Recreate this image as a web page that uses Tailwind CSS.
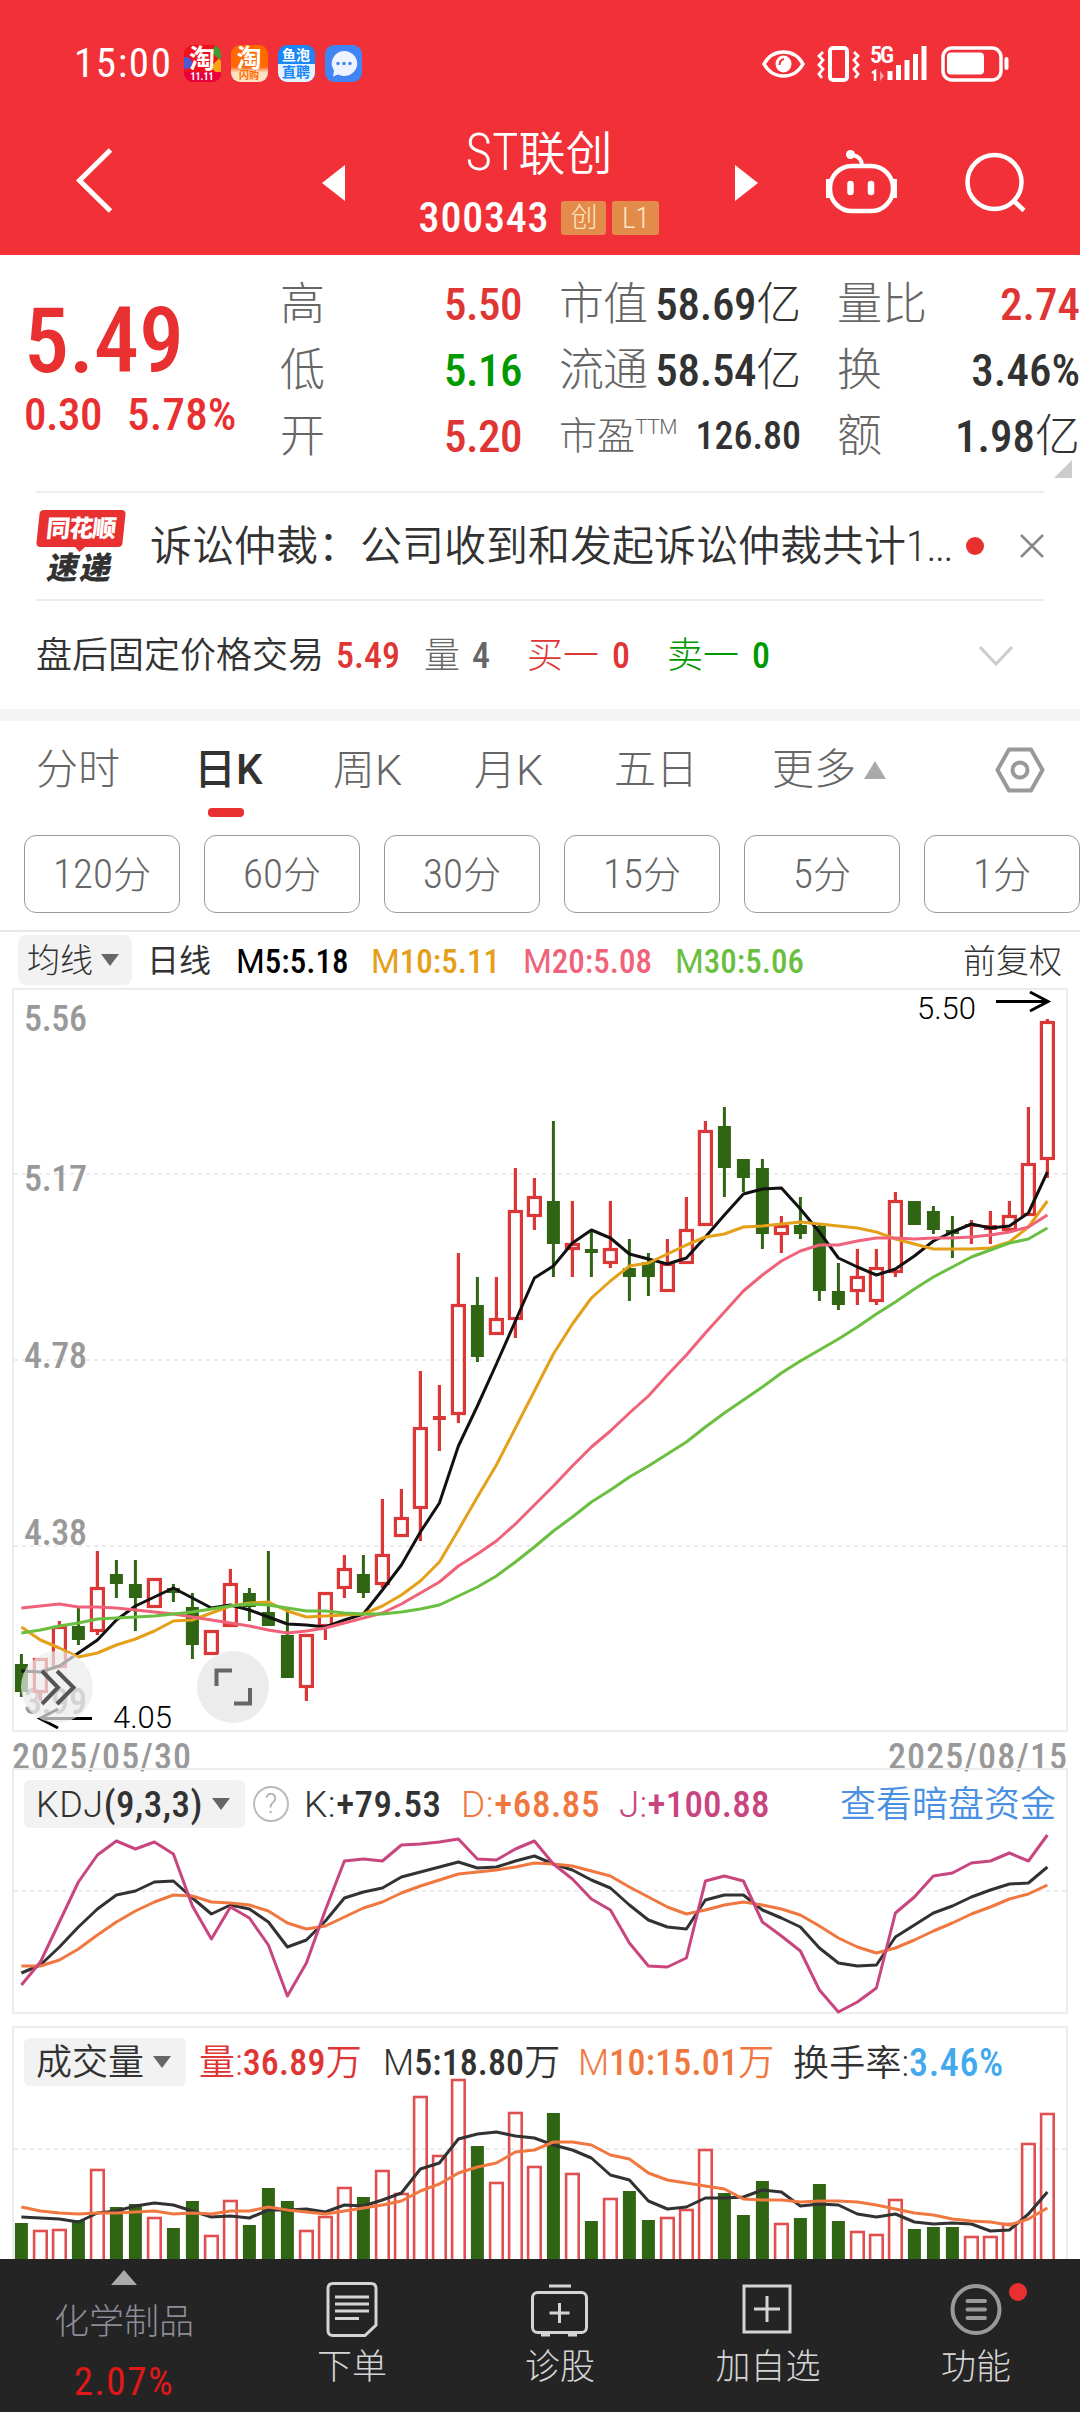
<!DOCTYPE html>
<html lang="zh-CN">
  <head>
    <meta charset="UTF-8" />
    <meta name="viewport" content="width=device-width, initial-scale=1.0" />
    <title>ST联创 300343</title>
    <script src="https://cdn.jsdelivr.net/npm/@tailwindcss/browser@4"></script>
  </head>
  <body
    class="w-[1080px] h-[2412px] overflow-hidden bg-white leading-none whitespace-nowrap text-[#323232] font-light font-['Roboto_Condensed','Noto_Sans_CJK_SC',sans-serif]"
  >
    <!-- header -->
    <header class="h-[255px] bg-[#f13038] text-white">
      <div class="flex h-[127px] items-center pl-[74px] pr-[70px]">
        <span class="text-[41px] font-normal tracking-[1.6px]">15:00</span>
        <div class="ml-[11px] flex gap-[10px] font-bold">
          <div class="relative h-[37px] w-[37px] overflow-hidden rounded-[9px] bg-[#f2101c] text-center">
            <div class="absolute -left-1 top-3 h-3 w-3 rounded-full bg-[#4a5bd8]"></div>
            <div class="absolute -right-1 top-0 h-3 w-3 rotate-45 bg-[#3f9c35]"></div>
            <div class="absolute -right-1 top-4 h-3 w-3 rotate-45 bg-[#f7a21b]"></div>
            <div class="relative pt-[1px] text-[26px]">淘</div>
            <div class="absolute bottom-0 w-full bg-[#e8003c] text-[10px]">11.11</div>
          </div>
          <div class="h-[37px] w-[37px] overflow-hidden rounded-[9px] bg-linear-to-b from-[#ff6a00] from-60% to-[#ffe2c4] to-75% text-center">
            <div class="pt-[1px] text-[25px]">淘</div>
            <div class="text-[10px] text-[#ff6a00]">闪购</div>
          </div>
          <div class="h-[37px] w-[37px] overflow-hidden rounded-[9px] bg-[#1b86f7] text-center text-[14px]">
            <div class="h-[19px] pt-[3px]">鱼泡</div>
            <div class="h-[18px] bg-[#e4f1ff] pt-[1px] text-[#1b86f7]">直聘</div>
          </div>
          <div class="h-[37px] w-[37px] rounded-[9px] bg-[#4184f4]">
            <svg viewBox="0 0 37 37" class="h-full w-full">
              <path d="M19 6a13 12.5 0 1 1-6 23.500l-5 2 1-6A13 12.500 0 0 1 19 6z" fill="#eef4ff" />
              <g fill="#4184f4"><circle cx="13" cy="18.500" r="1.700" /><circle cx="19" cy="18.500" r="1.700" /><circle cx="25" cy="18.500" r="1.700" /></g>
            </svg>
          </div>
        </div>
        <svg viewBox="762 34 248 60" class="ml-auto h-[60px] w-[248px]" fill="none" stroke="#fff" stroke-width="3.500">
          <path d="M764 64c9-16 30-16 39 0c-9 16-30 16-39 0z" />
          <ellipse cx="783.500" cy="64" rx="8" ry="8.500" fill="#fff" stroke="none" />
          <path d="M779.500 65q0-5 4.500-6" stroke="#f13038" stroke-width="2" />
          <rect x="830" y="48" width="17" height="32" rx="3" stroke-width="4" />
          <path d="M823 52l-4 4 4 4-4 5 4 4-4 5 3 4M854 52l4 4-4 4 4 5-4 4 4 5-3 4" stroke-width="2.800" />
          <text x="870" y="62.500" font-size="24" font-weight="600" fill="#fff" stroke="none" textLength="24">5G</text>
          <path d="M872 73l3-2v10" stroke-width="2.500" />
          <path d="M880 71l4 5-4 5z" fill="#f9a0a4" stroke="none" />
          <path d="M890 80V71M898.500 80V65M907 80V60M915.500 80V54M924 80V46" stroke-width="5" />
          <rect x="943" y="48" width="58" height="32" rx="9" stroke-width="3.500" />
          <rect x="947" y="52.500" width="37" height="22" rx="4" fill="#fff" stroke="none" />
          <path d="M1006.500 59v9" stroke-width="4" stroke-linecap="round" />
        </svg>
      </div>

      <div class="flex h-[128px] items-start">
        <svg viewBox="70 127 300 90" class="ml-[70px] h-[90px] w-[300px]">
          <path d="M110.500 150L79.500 180.500L110.500 211" fill="none" stroke="#fff" stroke-width="5" />
          <path d="M345 165v36l-23-18z" fill="#fff" />
        </svg>
        <div class="flex w-[338px] flex-col items-center">
          <h1 class="text-[47px] font-[350]"><span class="text-[51px]">ST</span>联创</h1>
          <div class="mt-[19px] flex items-center gap-[6px]">
            <span class="mr-[6px] text-[42px] font-medium tracking-[0.8px]">300343</span>
            <span class="flex h-[34px] w-[45px] items-center justify-center rounded-[3px] bg-[#e38b4b] text-[27px] text-[#ffe9c4]">创</span>
            <span class="flex h-[34px] w-[47px] items-center justify-center rounded-[3px] bg-[#e38b4b] text-[29px] text-[#ffe9c4]">L1</span>
          </div>
        </div>
        <svg viewBox="708 127 372 90" class="h-[90px] w-[372px]" fill="none" stroke="#fff" stroke-width="4.500">
          <path d="M735 165v36l23-18z" fill="#fff" stroke="none" />
          <rect x="830" y="166" width="63" height="45" rx="22" />
          <path d="M828 179v19M895 179v19" stroke-width="4" />
          <path d="M862 166q0-9-9-11" stroke-width="4" />
          <circle cx="850.500" cy="154.500" r="4.500" fill="#fff" stroke="none" />
          <path d="M850.500 184v8M871 184v8" stroke-width="6.500" stroke-linecap="round" />
          <circle cx="994.500" cy="182" r="27" />
          <path d="M1013 200l11 10.500" />
        </svg>
      </div>
    </header>

    <!-- quote -->
    <section class="relative flex h-[236px] items-start">
      <div class="w-[280px] pl-[24px] text-[#e93030]">
        <div class="pt-[42px] text-[90px] font-medium">5.49</div>
        <div class="flex gap-[25px] pt-[5px] text-[45px] font-medium tracking-[-0.5px]">
          <span>0.30</span><span class="tracking-[0.2px]">5.78%</span>
        </div>
      </div>
      <div class="grid w-[242px] auto-rows-[66px] grid-cols-[auto_auto] items-center justify-between pt-[16px] text-[45px] text-[#666]">
        <span>高</span><b class="justify-self-end font-medium tracking-[-0.5px] text-[#e03535]">5.50</b>
        <span>低</span><b class="justify-self-end font-medium tracking-[-0.5px] text-[#090]">5.16</b>
        <span>开</span><b class="justify-self-end font-medium tracking-[-0.5px] text-[#e03535]">5.20</b>
      </div>
      <!-- TTM hangs out of the narrow label column -->
      <div class="ml-[37px] grid w-[242px] auto-rows-[66px] grid-cols-[80px_auto] items-center justify-between pt-[16px] text-[45px] text-[#666]">
        <span class="tracking-[-1px]">市值</span><span class="justify-self-end tracking-[-0.3px] text-[#323232]"><b class="font-medium">58.69</b>亿</span>
        <span class="tracking-[-1px]">流通</span><span class="justify-self-end tracking-[-0.3px] text-[#323232]"><b class="font-medium">58.54</b>亿</span>
        <span class="flex text-[38px]">市盈<i class="not-italic font-[Roboto] text-[21px] tracking-[-0.5px]">TTM</i></span><b class="justify-self-end text-[38px] font-medium text-[#323232]">126.80</b>
      </div>
      <div class="ml-[36px] grid w-[243px] auto-rows-[66px] grid-cols-[auto_auto] items-center justify-between pt-[16px] text-[45px] text-[#666]">
        <span>量比</span><b class="justify-self-end font-medium text-[#e03535]">2.74</b>
        <span>换</span><b class="justify-self-end font-medium text-[#323232]">3.46%</b>
        <span>额</span><span class="justify-self-end text-[#323232]"><b class="font-medium">1.98</b>亿</span>
      </div>
      <svg viewBox="0 0 18 18" class="absolute right-[8px] top-[205px] h-[18px] w-[18px]"><path d="M18 0v18H0z" fill="#ccc" /></svg>
    </section>

    <!-- news -->
    <section class="mx-[36px] flex h-[110px] items-center border-y-2 border-[#eee]">
      <div class="flex w-[90px] flex-col items-center pt-[1px] font-black">
        <div class="relative flex h-[37px] w-[86px] -skew-x-6 items-center justify-center rounded-[4px] bg-[#e93030] text-[24px] tracking-[-1px] text-white">
          同花顺
          <div class="absolute -bottom-[5px] left-[38px] border-x-[6px] border-t-[6px] border-x-transparent border-t-[#e93030]"></div>
        </div>
        <div class="mt-[6px] -skew-x-12 text-[31px] tracking-[2px]">速递</div>
      </div>
      <p class="ml-[24px] w-[807px] pt-[2px] text-[42px] font-[350]">诉讼仲裁：公司收到和发起诉讼仲裁共计1<span class="tracking-[-1.500px]">...</span></p>
      <div class="ml-[9px] h-[18px] w-[18px] shrink-0 rounded-full bg-[#e93030]"></div>
      <svg viewBox="0 0 24 24" class="ml-auto h-[24px] w-[24px]" stroke="#888" stroke-width="2.500"><path d="M1 1L23 23M23 1L1 23" /></svg>
    </section>

    <!-- after-hours trading -->
    <section class="flex h-[108px] items-center pl-[36px] pr-[67px] pt-[2px] text-[36px]">
      <span class="font-[350]">盘后固定价格交易</span>
      <b class="ml-[12px] w-[65px] font-medium text-[#e03535]">5.49</b>
      <span class="ml-[23px] text-[#666]">量</span>
      <b class="ml-[12px] font-medium text-[#666]">4</b>
      <span class="ml-[37px] text-[#e03535]">买一</span>
      <b class="ml-[13px] font-medium text-[#e03535]">0</b>
      <span class="ml-[37px] text-[#090]">卖一</span>
      <b class="ml-[13px] font-medium text-[#090]">0</b>
      <svg viewBox="0 0 34 20" class="ml-auto h-[20px] w-[34px]" fill="none" stroke="#ccc" stroke-width="3"><path d="M1 1l16 17L33 1" /></svg>
    </section>
    <div class="h-[12px] bg-[#f4f4f4]"></div>

    <!-- period tabs -->
    <nav class="relative flex h-[96px] items-center pl-[36px] pt-[2px] text-[42px] text-[#666]">
      <span class="w-[158px]">分时</span>
      <span class="w-[139px] font-medium text-[#323232]">日<span class="font-[Roboto] text-[42px] tracking-[-2px]">K</span></span>
      <span class="w-[141px]">周<span class="font-[Roboto] text-[43px]">K</span></span>
      <span class="w-[140px]">月<span class="font-[Roboto] text-[43px]">K</span></span>
      <span class="w-[158px]">五日</span>
      <span>更多</span>
      <svg viewBox="0 0 22 18" class="ml-[8px] h-[18px] w-[22px]"><path d="M11 0l11 18H0z" fill="#aaa" /></svg>
      <svg viewBox="0 0 50 48" class="ml-[109px] h-[48px] w-[50px]" fill="none" stroke="#999" stroke-width="4">
        <path d="M14 3.500h22L47.500 24L36 44.500H14L2.500 24z" stroke-linejoin="round" /><circle cx="25" cy="24" r="7.500" />
      </svg>
      <div class="absolute left-[208px] top-[87px] h-[9px] w-[36px] rounded-[4px] bg-[#e93030]"></div>
    </nav>
    <div class="flex h-[115px] gap-[24px] border-b-2 border-[#e8e8e8] pl-[24px] pt-[18px] text-[38px] text-[#666]">
      <button class="h-[78px] w-[156px] shrink-0 rounded-[12px] border border-[#999]"><span class="text-[41px]">120</span>分</button>
      <button class="h-[78px] w-[156px] shrink-0 rounded-[12px] border border-[#999]"><span class="text-[41px]">60</span>分</button>
      <button class="h-[78px] w-[156px] shrink-0 rounded-[12px] border border-[#999]"><span class="text-[41px]">30</span>分</button>
      <button class="h-[78px] w-[156px] shrink-0 rounded-[12px] border border-[#999]"><span class="text-[41px]">15</span>分</button>
      <button class="h-[78px] w-[156px] shrink-0 rounded-[12px] border border-[#999]"><span class="text-[41px]">5</span>分</button>
      <button class="h-[78px] w-[156px] shrink-0 rounded-[12px] border border-[#999]"><span class="text-[41px]">1</span>分</button>
    </div>

    <!-- moving averages legend -->
    <div class="flex h-[56px] items-center pl-[18px] pr-[18px] text-[33px]">
      <div class="flex h-[50px] w-[114px] items-center gap-[8px] rounded-[8px] bg-[#f2f2f2] pl-[9px]">
        <span>均线</span>
        <svg viewBox="0 0 18 12" class="h-[12px] w-[18px]"><path d="M0 0h18L9 12z" fill="#666" /></svg>
      </div>
      <span class="ml-[15px] w-[89px] pt-[2px] text-[32px] font-normal">日线</span>
      <span class="w-[135px] pt-[2px] font-medium text-black"><span class="font-[Roboto] font-normal">M</span>5:5.18</span>
      <span class="w-[152px] pt-[2px] font-medium text-[#e5a01a]"><span class="font-[Roboto] font-normal">M</span>10:5.11</span>
      <span class="w-[152px] pt-[2px] font-medium text-[#f0627a]"><span class="font-[Roboto] font-normal">M</span>20:5.08</span>
      <span class="pt-[2px] font-medium text-[#6abf40]"><span class="font-[Roboto] font-normal">M</span>30:5.06</span>
      <span class="ml-auto pt-[2px]">前复权</span>
    </div>

    <!-- candles -->
    <svg id="kline" viewBox="0 988 1080 780" class="relative block h-[780px] w-[1080px] overflow-visible">
      <g fill="none" stroke="#ececec" stroke-width="2">
        <rect x="13" y="989" width="1054" height="742" />
        <path d="M14 1174H1066M14 1360H1066M14 1546H1066" stroke-dasharray="4 4" />
      </g>
      <g fill="#999" font-size="36" font-weight="500">
        <text x="24" y="1031" textLength="63">5.56</text>
        <text x="24" y="1191" textLength="63">5.17</text>
        <text x="24" y="1368" textLength="63">4.78</text>
        <text x="24" y="1545" textLength="63">4.38</text>
        <text x="24" y="1714" textLength="63">3.99</text>
        <text x="12" y="1769" textLength="179">2025/05/30</text>
        <text x="888" y="1769" textLength="179">2025/08/15</text>
      </g>
      <g class="plot"></g>
      <g class="font-[Roboto]" fill="#000" font-size="31" font-weight="300">
        <text x="917" y="1019" textLength="59">5.50</text>
        <text x="113" y="1728" textLength="59">4.05</text>
      </g>
      <path d="M996 1001.500H1047M1030 992l18 9.500l-18 9.500M92 1718.500H41M58 1709l-18 9.500l18 9.500" fill="none" stroke="#000" stroke-width="3" />
      <circle cx="57" cy="1687" r="36" fill="#ebebeb" fill-opacity="0.7" />
      <path d="M42 1671l16 16.500l-16 16.500M57 1671l16.500 16.500l-16.500 16.500" fill="none" stroke="#555" stroke-width="4" />
      <circle cx="233" cy="1687" r="36" fill="#ececec" />
      <path d="M216.500 1686v-15.500H232M234 1703.500h16V1688" fill="none" stroke="#666" stroke-width="4" />
    </svg>

    <!-- KDJ -->
    <section class="relative mx-[12px] h-[246px] border-2 border-[#ececec]">
      <svg id="kdj" viewBox="14 1770 1052 242" class="absolute inset-0 h-[242px] w-[1052px] overflow-visible">
        <path d="M14 1891H1066" stroke="#ececec" stroke-width="2" stroke-dasharray="4 4" />
        <g class="plot"></g>
      </svg>
      <div class="relative flex items-center pl-[10px] pr-[10px] pt-[10px] text-[37px] font-medium">
        <div class="flex h-[48px] w-[221px] items-center justify-between rounded-[6px] bg-[#f2f2f2] pl-[12px] pr-[15px]">
          <span class="tracking-[0.5px]"><span class="font-[Roboto] text-[36px] font-light">KDJ</span>(9,3,3)</span>
          <svg viewBox="0 0 18 12" class="h-[12px] w-[18px]"><path d="M0 0h18L9 12z" fill="#666" /></svg>
        </div>
        <div class="ml-[8px] flex h-[36px] w-[36px] items-center justify-center rounded-full border-2 border-[#bbb] font-[Roboto] text-[27px] font-light text-[#aaa]">?</div>
        <span class="ml-[15px] w-[157px] tracking-[0.5px]"><span class="font-[Roboto] font-light">K:</span>+79.53</span>
        <span class="w-[158px] tracking-[0.6px] text-[#f07840]"><span class="font-[Roboto] font-light">D:</span>+68.85</span>
        <span class="tracking-[0.2px] text-[#c8457f]"><span class="font-[Roboto] font-light">J:</span>+100.88</span>
        <span class="ml-auto pt-[2px] text-[36px] font-[350] text-[#4a90e2]">查看暗盘资金</span>
      </div>
    </section>

    <!-- volume -->
    <section class="relative mx-[12px] mt-[12px] h-[233px] border-2 border-b-0 border-[#ececec]">
      <svg id="vol" viewBox="14 2028 1052 231" class="absolute inset-0 h-[231px] w-[1052px]">
        <path d="M14 2149H1066" stroke="#ececec" stroke-width="2" stroke-dasharray="4 4" />
        <g class="plot"></g>
      </svg>
      <div class="relative flex items-center pl-[10px] pt-[10px] text-[36px] font-[350]">
        <div class="flex h-[48px] w-[162px] items-center justify-between rounded-[6px] bg-[#f2f2f2] pl-[12px] pr-[15px]">
          <span class="pt-px">成交量</span>
          <svg viewBox="0 0 18 12" class="h-[12px] w-[18px]"><path d="M0 0h18L9 12z" fill="#666" /></svg>
        </div>
        <span class="ml-[13px] w-[184px] pt-px tracking-[0.2px] text-[#e03535]">量:<b class="font-medium">36.89</b>万</span>
        <span class="w-[195px] pt-px tracking-[0.1px]"><span class="font-[Roboto]">M</span><b class="font-medium">5:18.80</b>万</span>
        <span class="w-[215px] pt-px tracking-[0.2px] text-[#f07840]"><span class="font-[Roboto]">M</span><b class="font-medium">10:15.01</b>万</span>
        <span class="pt-px tracking-[0.2px]">换手率:<b class="text-[38px] font-medium tracking-[0.6px] text-[#42a9ef]">3.46%</b></span>
      </div>
    </section>

    <!-- bottom bar -->
    <footer class="flex h-[153px] bg-[#242424] text-[35px] text-[#d4d4d4]">
      <div class="flex w-[248px] flex-col items-center pt-[11px]">
        <svg viewBox="0 0 26 15" class="h-[15px] w-[26px]"><path d="M13 0l13 15H0z" fill="#aaa" /></svg>
        <span class="mt-[20px] text-[#8d8d99]">化学制品</span>
        <span class="mt-[23px] text-[39px] font-normal tracking-[1.6px] text-[#e01818]">2.07%</span>
      </div>
      <div class="flex w-[208px] flex-col items-center pt-[20px]">
        <svg viewBox="0 0 60 60" class="h-[60px] w-[60px]" fill="none" stroke="#d4d4d4" stroke-width="3">
          <path d="M11 4.500h38q5 0 5 5V46L43 56.500H11q-5 0-5-5v-42q0-5 5-5z" /><path d="M13 18h34M13 25h34M13 32h34M13 39.500h24" />
        </svg>
        <span class="mt-[11px]">下单</span>
      </div>
      <div class="flex w-[208px] flex-col items-center pt-[20px]">
        <svg viewBox="0 0 60 60" class="h-[60px] w-[60px]" fill="none" stroke="#d4d4d4" stroke-width="3">
          <rect x="2.500" y="13.500" width="54" height="40" rx="5" /><path d="M19 7h22M29.500 24v20M19.500 34h20M11 56h9M38 56h9" />
        </svg>
        <span class="mt-[11px]">诊股</span>
      </div>
      <div class="flex w-[208px] flex-col items-center pt-[20px]">
        <svg viewBox="0 0 60 60" class="h-[60px] w-[60px]" fill="none" stroke="#d4d4d4" stroke-width="3">
          <rect x="6" y="7" width="46" height="46" /><path d="M29 17v26M16 30h26" />
        </svg>
        <span class="mt-[11px]">加自选</span>
      </div>
      <div class="relative flex w-[208px] flex-col items-center pt-[20px]">
        <svg viewBox="0 0 60 60" class="h-[60px] w-[60px]" fill="none" stroke="#999" stroke-width="4">
          <circle cx="30" cy="30.500" r="23.500" /><path d="M21.500 22h17.500M21.500 30.500h17.500M21.500 39h17.500" stroke-linecap="round" />
        </svg>
        <span class="mt-[11px]">功能</span>
        <div class="absolute left-[137px] top-[24px] h-[18px] w-[18px] rounded-full bg-[#e93030]"></div>
      </div>
    </footer>

    <script>
      const RED = '#dc3737';
      const GREEN = '#306514';
      const STEP = 19;
      const x = (i) => 21.4 + i * STEP;

      // [up, high, body top, body bottom, low]
      const candles = [
        [0,1654,1664,1692,1697],[1,1658,1658,1693,1701],[1,1621,1626,1668,1668],[0,1608,1626,1640,1645],[1,1551,1587,1632,1635],
        [0,1560,1574,1584,1598],[0,1560,1584,1598,1631],[1,1578,1578,1608,1608],[0,1584,1588,1593,1602],[0,1593,1607,1645,1659],
        [1,1630,1630,1655,1655],[1,1569,1583,1627,1627],[0,1588,1593,1607,1621],[0,1551,1612,1626,1626],[0,1609,1635,1678,1678],
        [1,1634,1634,1688,1701],[1,1592,1592,1627,1640],[1,1555,1568,1589,1598],[0,1555,1574,1593,1598],[1,1499,1554,1585,1588],
        [1,1489,1517,1537,1537],[1,1371,1427,1509,1541],[1,1385,1416,1420,1451],[1,1253,1304,1415,1423],[0,1277,1305,1357,1362],
        [1,1277,1318,1335,1335],[1,1168,1210,1320,1338],[1,1178,1196,1217,1230],[0,1121,1201,1244,1277],[1,1201,1243,1250,1277],
        [0,1230,1249,1253,1277],[1,1201,1248,1264,1268],[0,1239,1268,1277,1301],[0,1253,1262,1277,1296],[1,1239,1263,1292,1292],
        [1,1197,1229,1264,1264],[1,1121,1130,1226,1226],[0,1107,1126,1168,1197],[0,1159,1159,1178,1192],[0,1159,1168,1234,1249],
        [1,1216,1225,1235,1253],[0,1197,1225,1234,1239],[0,1225,1226,1291,1301],[0,1263,1291,1305,1310],[1,1249,1276,1292,1305],
        [1,1249,1267,1302,1305],[1,1192,1200,1273,1277],[0,1201,1201,1225,1225],[0,1206,1211,1230,1234],[0,1216,1230,1234,1258],
        [1,1220,1224,1227,1244],[1,1211,1225,1230,1244],[1,1201,1215,1231,1231],[1,1107,1163,1216,1216],[1,1019,1021,1160,1178],
      ];
      const ma = {
        '#111': [1671,1672,1666,1653,1640,1620,1606,1597,1588,1598,1608,1605,1610,1617,1624,1625,1627,1620,1614,1590,1565,1532,1503,1446,1406,1364,1321,1278,1266,1243,1230,1238,1254,1259,1264,1258,1237,1215,1194,1189,1188,1209,1232,1258,1267,1275,1269,1256,1241,1232,1224,1228,1226,1213,1172],
        '#e5a01a': [1627,1640,1648,1657,1653,1645,1639,1631,1621,1620,1613,1606,1603,1602,1611,1617,1616,1615,1614,1606,1595,1581,1562,1530,1497,1465,1428,1391,1354,1324,1298,1281,1266,1263,1254,1245,1237,1234,1227,1226,1224,1222,1224,1226,1228,1232,1239,1244,1249,1249,1249,1248,1242,1227,1201],
        '#f0627a': [1608,1606,1604,1607,1607,1608,1610,1612,1614,1617,1620,1623,1626,1630,1633,1631,1628,1623,1618,1613,1604,1593,1582,1566,1554,1541,1524,1505,1486,1466,1447,1431,1413,1396,1375,1355,1333,1312,1291,1275,1261,1251,1245,1245,1241,1238,1238,1239,1238,1238,1237,1235,1232,1227,1215],
        '#6abf40': [1633,1630,1626,1623,1619,1618,1617,1616,1614,1612,1609,1606,1604,1605,1608,1611,1611,1613,1614,1614,1612,1609,1605,1596,1587,1576,1562,1547,1531,1517,1502,1490,1477,1466,1454,1442,1427,1413,1400,1387,1373,1361,1350,1339,1327,1314,1302,1289,1277,1267,1257,1250,1243,1239,1228],
      };
      const kdj = {
        '#323232': [1973,1965,1947,1927,1909,1895,1891,1882,1881,1898,1914,1905,1909,1922,1947,1940,1921,1898,1892,1888,1877,1872,1867,1862,1868,1867,1861,1856,1864,1870,1880,1888,1905,1920,1927,1929,1900,1895,1895,1910,1918,1927,1948,1963,1966,1965,1937,1925,1913,1906,1897,1890,1884,1883,1867],
        '#f07840': [1966,1966,1960,1949,1935,1922,1911,1902,1895,1896,1902,1903,1905,1911,1923,1929,1926,1917,1908,1902,1893,1886,1880,1874,1872,1870,1867,1863,1864,1866,1871,1876,1887,1897,1907,1914,1910,1905,1902,1905,1909,1915,1926,1938,1947,1953,1948,1940,1931,1923,1914,1907,1899,1894,1885],
        '#c8457f': [1985,1962,1922,1882,1855,1841,1849,1842,1854,1906,1939,1907,1918,1945,1996,1963,1910,1861,1859,1861,1845,1844,1842,1839,1859,1860,1849,1841,1864,1879,1899,1910,1943,1966,1967,1958,1881,1876,1881,1922,1936,1951,1990,2012,2002,1988,1913,1897,1876,1873,1863,1861,1853,1861,1835],
      };
      const volume = [2223,2230,2229,2220,2169,2207,2204,2217,2228,2201,2235,2200,2225,2188,2201,2230,2216,2187,2197,2170,2193,2096,2155,2079,2146,2182,2112,2166,2113,2173,2221,2198,2191,2220,2217,2209,2149,2193,2215,2181,2223,2218,2184,2221,2231,2234,2199,2229,2227,2227,2236,2236,2223,2143,2113];
      const volMa = {
        '#323232': [2217,2218,2219,2222,2213,2211,2206,2203,2205,2211,2217,2216,2218,2210,2210,2209,2212,2205,2206,2200,2193,2169,2163,2139,2134,2132,2136,2138,2145,2150,2158,2175,2180,2201,2209,2207,2198,2198,2197,2190,2192,2206,2204,2205,2214,2217,2214,2222,2224,2223,2224,2231,2230,2214,2192],
        '#f07840': [2207,2211,2213,2214,2213,2213,2212,2211,2214,2213,2214,2211,2211,2207,2210,2212,2214,2211,2208,2205,2201,2191,2184,2173,2167,2163,2152,2150,2142,2142,2145,2155,2159,2173,2180,2183,2186,2189,2199,2200,2200,2202,2201,2201,2202,2205,2209,2213,2215,2219,2221,2222,2225,2219,2208],
      };

      const lines = (set) =>
        Object.entries(set)
          .map(([color, ys]) => `<polyline points="${ys.map((y, i) => x(i) + ',' + y).join(' ')}" fill="none" stroke="${color}" stroke-width="3" stroke-linejoin="round"/>`)
          .join('');

      const candle = ([up, high, top, bottom, low], i) => {
        const c = x(i);
        if (!up) {
          return `<path d="M${c} ${high}V${low}" stroke="${GREEN}" stroke-width="3"/><rect x="${c - 6.5}" y="${top}" width="13" height="${bottom - top}" fill="${GREEN}"/>`;
        }
        const body = bottom - top < 6
          ? `<rect x="${c - 6.5}" y="${top}" width="13" height="${bottom - top}" fill="${RED}"/>`
          : `<rect x="${c - 6}" y="${top + 1.5}" width="12" height="${bottom - top - 3}" fill="none" stroke="${RED}" stroke-width="3.2"/>`;
        return `<path d="M${c} ${high}V${top}M${c} ${bottom}V${low}" stroke="${RED}" stroke-width="3.2"/>${body}`;
      };

      const bar = (top, i) =>
        candles[i][0]
          ? `<rect x="${x(i) - 6.3}" y="${top + 1}" width="12.6" height="200" fill="none" stroke="#e05050" stroke-width="2.6"/>`
          : `<rect x="${x(i) - 6.5}" y="${top}" width="13" height="200" fill="${GREEN}"/>`;

      document.querySelector('#kline .plot').innerHTML = candles.map(candle).join('') + lines(ma);
      document.querySelector('#kdj .plot').innerHTML = lines(kdj);
      document.querySelector('#vol .plot').innerHTML = volume.map(bar).join('') + lines(volMa);
    </script>
  </body>
</html>
